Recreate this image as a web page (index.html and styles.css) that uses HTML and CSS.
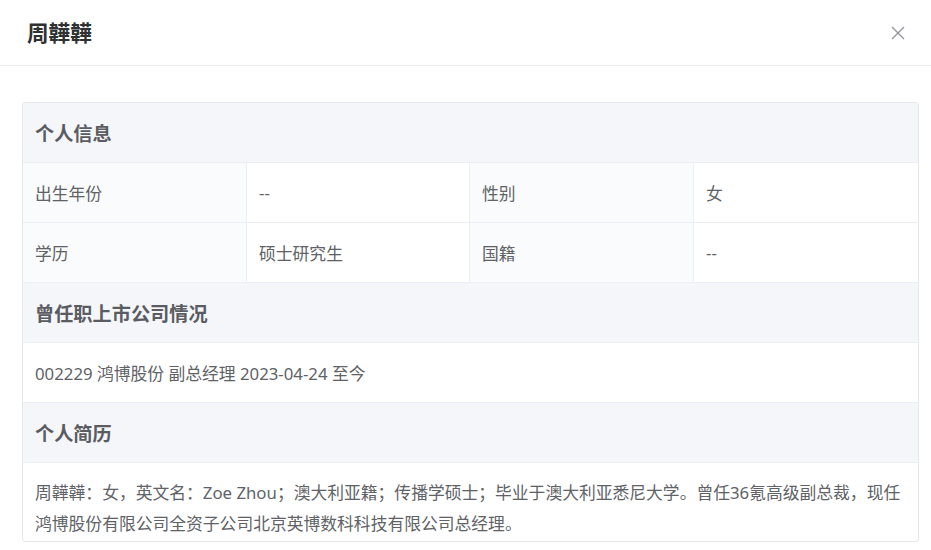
FILE: index.html
```html
<!DOCTYPE html>
<html lang="zh-CN">
<head>
<meta charset="utf-8">
<title>周韡韡</title>
<link rel="stylesheet" href="styles.css">
</head>
<body>
<div class="dialog">
  <div class="dialog-header">
    <div class="dialog-title">周韡韡</div>
    <button class="close-btn" aria-label="关闭">
      <svg width="14" height="14" viewBox="0 0 14 14"><path d="M1 1 L13 13 M13 1 L1 13" stroke="#909399" stroke-width="1.3" fill="none"/></svg>
    </button>
  </div>
  <div class="dialog-body">
    <div class="card">
      <div class="section-title">个人信息</div>
      <div class="info-grid">
        <div class="cell label">出生年份</div>
        <div class="cell value">--</div>
        <div class="cell label">性别</div>
        <div class="cell value last">女</div>
        <div class="cell label">学历</div>
        <div class="cell value">硕士研究生</div>
        <div class="cell label">国籍</div>
        <div class="cell value last">--</div>
      </div>
      <div class="section-title">曾任职上市公司情况</div>
      <div class="row-text">002229 鸿博股份 副总经理 2023-04-24 至今</div>
      <div class="section-title">个人简历</div>
      <div class="bio">周韡韡：女，英文名：Zoe Zhou；澳大利亚籍；传播学硕士；毕业于澳大利亚悉尼大学。曾任36氪高级副总裁，现任鸿博股份有限公司全资子公司北京英博数科科技有限公司总经理。</div>
    </div>
  </div>
</div>
</body>
</html>
```
FILE: styles.css
```css
html, body {
  margin: 0;
  padding: 0;
  background: #ffffff;
}
body {
  font-family: "Noto Sans", "Noto Sans CJK SC", "Microsoft YaHei", sans-serif;
  color: #606266;
  width: 931px;
  height: 550px;
  overflow: hidden;
}
.dialog-header {
  height: 65px;
  border-bottom: 1px solid #ebeef5;
  display: flex;
  align-items: center;
  justify-content: space-between;
  padding: 0 26px 0 27px;
  box-sizing: content-box;
}
.dialog-title {
  font-size: 21.6px;
  font-weight: 700;
  color: #303133;
  line-height: 1;
}
.close-btn {
  border: none;
  background: transparent;
  padding: 0;
  width: 14px;
  height: 14px;
  display: flex;
  cursor: pointer;
}
.dialog-body {
  padding: 36px 12px 0 22px;
}
.card {
  width: 895px;
  border: 1px solid #e4e7ed;
  border-radius: 3px;
  overflow: hidden;
}
.section-title {
  height: 59px;
  border-bottom: 1px solid #ebeef5;
  background: #f5f6fa;
  display: flex;
  align-items: center;
  padding: 0 12px;
  font-size: 19.2px;
  font-weight: 700;
  color: #5a5c61;
}
.info-grid {
  display: grid;
  grid-template-columns: 224px 223px 224px 224px;
}
.cell {
  height: 59px;
  border-bottom: 1px solid #ebeef5;
  border-right: 1px solid #ebeef5;
  display: flex;
  align-items: center;
  padding: 0 12px;
  font-size: 16.8px;
  color: #606266;
  box-sizing: content-box;
  min-width: 0;
}
.cell.last {
  border-right: none;
}
.cell.label {
  background: #fafbfc;
}
.cell.value {
  background: #ffffff;
}
.row-text {
  height: 59px;
  border-bottom: 1px solid #ebeef5;
  display: flex;
  align-items: center;
  padding: 0 12px;
  font-size: 16.8px;
  color: #606266;
}
.bio {
  padding: 14px 12px 2px 12px;
  font-size: 16.8px;
  line-height: 31px;
  color: #606266;
}
```
